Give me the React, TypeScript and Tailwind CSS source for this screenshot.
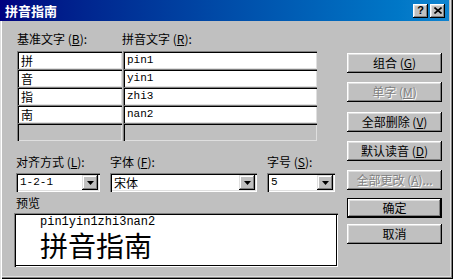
import React from "react";

const cjk = { fontFamily: '"Noto Sans CJK SC", "Noto Sans", sans-serif' };
const mono = { fontFamily: '"Liberation Mono", "DejaVu Sans Mono", monospace' };

function Btn({ children, disabled, isDefault, className = "" }: { children: React.ReactNode; disabled?: boolean; isDefault?: boolean; className?: string }) {
  const inner = (
    <div
      className={`flex h-full w-full items-center justify-center text-[12px] leading-none bg-[#c0c0c0] shadow-[inset_-1px_-1px_#000,inset_1px_1px_#fff,inset_-2px_-2px_#808080,inset_2px_2px_#dfdfdf] ${disabled ? "text-[#808080] [text-shadow:1px_1px_0_#fff]" : "text-black"}`}
      style={cjk}
    >
      {children}
    </div>
  );
  if (isDefault) {
    return <div className={`h-[20px] w-[95px] border border-black ${className}`}>{inner}</div>;
  }
  return <div className={`h-[20px] w-[95px] ${className}`}>{inner}</div>;
}

function Cell({ children, w, gray, isMono }: { children?: React.ReactNode; w: string; gray?: boolean; isMono?: boolean }) {
  return (
    <div
      className={`${w} h-[18px] flex items-center pl-[4px] pt-[1px] ${gray ? "bg-[#c0c0c0]" : "bg-white"} shadow-[inset_1px_1px_#808080,inset_2px_2px_#000,inset_-1px_-1px_#dfdfdf] ${isMono ? "text-[11px]" : "text-[12px]"} text-black leading-none`}
      style={isMono ? mono : cjk}
    >
      {children}
    </div>
  );
}

function Arrow() {
  return (
    <div className="ml-auto mr-[2px] flex h-[15px] w-[16px] items-center justify-center bg-[#c0c0c0] shadow-[inset_-1px_-1px_#000,inset_1px_1px_#dfdfdf,inset_-2px_-2px_#808080,inset_2px_2px_#fff]">
      <svg width="7" height="4" viewBox="0 0 7 4"><path d="M0 0h7L3.5 4z" fill="#000" /></svg>
    </div>
  );
}

function Combo({ w, value, isMono }: { w: string; value: string; isMono?: boolean }) {
  return (
    <div className={`${w} h-[19px] flex items-center bg-white shadow-[inset_1px_1px_#808080,inset_2px_2px_#000,inset_-1px_-1px_#fff,inset_-2px_-2px_#dfdfdf]`}>
      <span className={`pl-[4px] text-black leading-none ${isMono ? "text-[11px]" : "text-[12px]"}`} style={isMono ? mono : cjk}>
        {value}
      </span>
      <Arrow />
    </div>
  );
}

function Label({ text, k, className = "" }: { text: string; k?: string; className?: string }) {
  return (
    <div className={`text-[12px] leading-none text-black whitespace-nowrap ${className}`} style={cjk}>
      {text}
      {k && (
        <>
          {" ("}
          <u>{k}</u>
          {"):"}
        </>
      )}
    </div>
  );
}

export default function App() {
  const rows = [
    ["拼", "pin1"],
    ["音", "yin1"],
    ["指", "zhi3"],
    ["南", "nan2"],
  ];
  return (
    <div className="relative flex h-[279px] w-[453px] flex-col bg-[#c0c0c0] shadow-[inset_1px_0_#dfdfdf,inset_2px_0_#fff,inset_-1px_-1px_#000,inset_-2px_-2px_#808080,inset_-3px_-3px_#dfdfdf] overflow-hidden">
      {/* Title bar */}
      <div className="flex h-[21px] w-[449px] items-center bg-gradient-to-r from-[#000080] to-[#1084d0] pl-[5px] pr-[4px]">
        <span className="text-[13px] font-bold leading-none text-white" style={cjk}>拼音指南</span>
        <div className="ml-auto flex gap-[2px]">
          <div className="flex h-[14px] w-[15px] items-center justify-center bg-[#c0c0c0] shadow-[inset_-1px_-1px_#000,inset_1px_1px_#fff,inset_-2px_-2px_#808080,inset_2px_2px_#dfdfdf]">
            <span className="text-[11px] font-bold leading-none text-black" style={{ fontFamily: '"Liberation Sans", sans-serif' }}>?</span>
          </div>
          <div className="flex h-[14px] w-[15px] items-center justify-center bg-[#c0c0c0] shadow-[inset_-1px_-1px_#000,inset_1px_1px_#fff,inset_-2px_-2px_#808080,inset_2px_2px_#dfdfdf]">
            <svg width="8" height="7" viewBox="0 0 8 7">
              <path d="M0.5 0.5L7.5 6.5M7.5 0.5L0.5 6.5" stroke="#000" strokeWidth="1.6" />
            </svg>
          </div>
        </div>
      </div>

      {/* Body */}
      <div className="flex pl-[14px]">
        {/* Left column */}
        <div className="flex w-[324px] flex-col">
          <div className="flex h-[30px] items-end pb-[6px] pl-[3px]">
            <Label text="基准文字" k="B" className="w-[105px]" />
            <Label text="拼音文字" k="R" />
          </div>
          <div className="ml-[3px] flex flex-col">
            {rows.map(([a, b]) => (
              <div key={a} className="flex gap-[1px]">
                <Cell w="w-[105px]">{a}</Cell>
                <Cell w="w-[194px]" isMono>{b}</Cell>
              </div>
            ))}
            <div className="flex gap-[1px]">
              <Cell w="w-[105px]" gray />
              <Cell w="w-[194px]" gray />
            </div>
          </div>
          <div className="flex h-[32px] items-end pb-[5px] pl-[2px]">
            <Label text="对齐方式" k="L" className="w-[94px]" />
            <Label text="字体" k="F" className="w-[157px]" />
            <Label text="字号" k="S" />
          </div>
          <div className="flex pl-[2px]">
            <Combo w="w-[84px]" value="1-2-1" isMono />
            <div className="w-[10px]" />
            <Combo w="w-[147px]" value="宋体" />
            <div className="w-[10px]" />
            <Combo w="w-[68px]" value="5" isMono />
          </div>
          <div className="flex h-[21px] items-end pb-[4px] pl-[2px]">
            <Label text="预览" />
          </div>
          <div className="h-[54px] w-[324px] bg-white shadow-[inset_1px_1px_#808080,inset_2px_2px_#000,inset_-1px_-1px_#fff,inset_-2px_-2px_#000] pl-[26px] pt-[3px]">
            <div className="text-[12px] leading-[12px] text-black" style={mono}>pin1yin1zhi3nan2</div>
            <div className="mt-[2px] text-[28px] leading-[30px] text-black" style={cjk}>拼音指南</div>
          </div>
        </div>

        {/* Right column */}
        <div className="ml-[9px] flex flex-col pt-[32px]">
          <Btn>组合 (<u>G</u>)</Btn>
          <Btn disabled className="mt-[9px]">单字 (<u>M</u>)</Btn>
          <Btn className="mt-[10px]">全部删除 (<u>V</u>)</Btn>
          <Btn className="mt-[9px]">默认读音 (<u>D</u>)</Btn>
          <Btn disabled className="mt-[9px]">全部更改 (<u>A</u>)...</Btn>
          <Btn isDefault className="mt-[8px]">确定</Btn>
          <Btn className="mt-[6px]">取消</Btn>
        </div>
      </div>
    </div>
  );
}
